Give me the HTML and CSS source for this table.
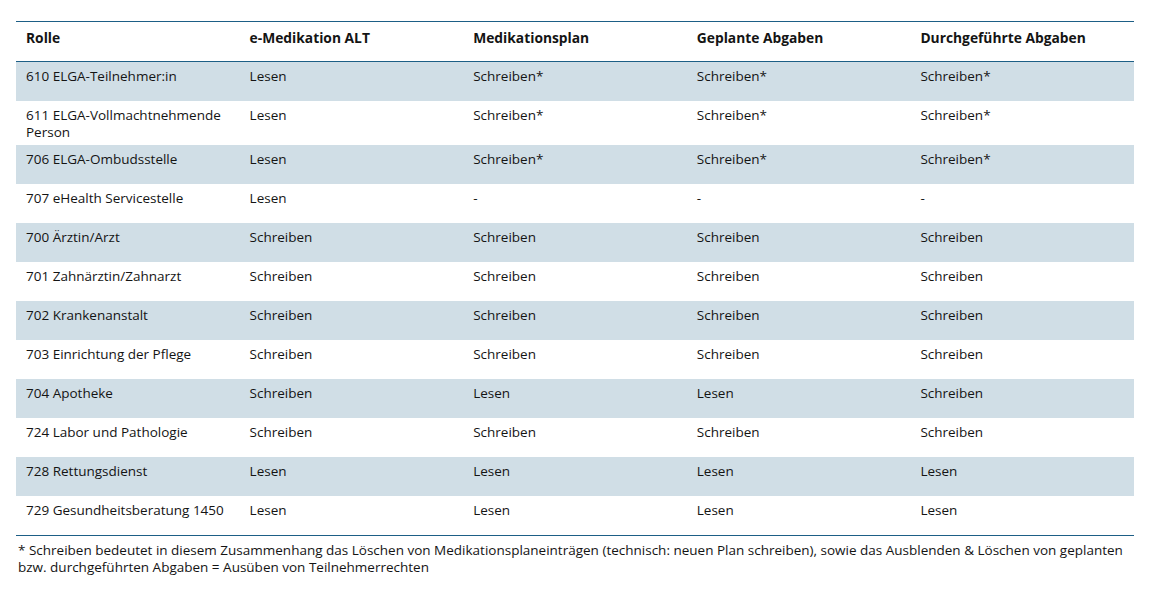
FILE: index.html
```html
<!DOCTYPE html>
<html lang="de">
<head>
<meta charset="utf-8">
<title>Rollen und Berechtigungen</title>
<link rel="stylesheet" href="styles.css">
</head>
<body>
<div class="page">
  <table class="roles">
    <thead>
      <tr>
        <th>Rolle</th>
        <th>e-Medikation ALT</th>
        <th>Medikationsplan</th>
        <th>Geplante Abgaben</th>
        <th>Durchgeführte Abgaben</th>
      </tr>
    </thead>
    <tbody>
      <tr class="shade"><td>610 ELGA-Teilnehmer:in</td><td>Lesen</td><td>Schreiben*</td><td>Schreiben*</td><td>Schreiben*</td></tr>
      <tr><td>611 ELGA-Vollmachtnehmende Person</td><td>Lesen</td><td>Schreiben*</td><td>Schreiben*</td><td>Schreiben*</td></tr>
      <tr class="shade"><td>706 ELGA-Ombudsstelle</td><td>Lesen</td><td>Schreiben*</td><td>Schreiben*</td><td>Schreiben*</td></tr>
      <tr><td>707 eHealth Servicestelle</td><td>Lesen</td><td>-</td><td>-</td><td>-</td></tr>
      <tr class="shade"><td>700 Ärztin/Arzt</td><td>Schreiben</td><td>Schreiben</td><td>Schreiben</td><td>Schreiben</td></tr>
      <tr><td>701 Zahnärztin/Zahnarzt</td><td>Schreiben</td><td>Schreiben</td><td>Schreiben</td><td>Schreiben</td></tr>
      <tr class="shade"><td>702 Krankenanstalt</td><td>Schreiben</td><td>Schreiben</td><td>Schreiben</td><td>Schreiben</td></tr>
      <tr><td>703 Einrichtung der Pflege</td><td>Schreiben</td><td>Schreiben</td><td>Schreiben</td><td>Schreiben</td></tr>
      <tr class="shade"><td>704 Apotheke</td><td>Schreiben</td><td>Lesen</td><td>Lesen</td><td>Schreiben</td></tr>
      <tr><td>724 Labor und Pathologie</td><td>Schreiben</td><td>Schreiben</td><td>Schreiben</td><td>Schreiben</td></tr>
      <tr class="shade"><td>728 Rettungsdienst</td><td>Lesen</td><td>Lesen</td><td>Lesen</td><td>Lesen</td></tr>
      <tr><td>729 Gesundheitsberatung 1450</td><td>Lesen</td><td>Lesen</td><td>Lesen</td><td>Lesen</td></tr>
    </tbody>
  </table>
  <p class="note">* Schreiben bedeutet in diesem Zusammenhang das Löschen von Medikationsplaneinträgen (technisch: neuen Plan schreiben), sowie das Ausblenden &amp; Löschen von geplanten bzw. durchgeführten Abgaben = Ausüben von Teilnehmerrechten</p>
</div>
</body>
</html>
```

FILE: styles.css
```css
html, body {
  margin: 0;
  padding: 0;
  background: #ffffff;
}

body {
  font-family: "Open Sans", "Noto Sans", sans-serif;
  font-size: 13.5px;
  color: #141414;
}

.page {
  padding: 21px 0 0 16px;
  width: 1118px;
}

.roles {
  width: 1118px;
  border-collapse: collapse;
  table-layout: fixed;
  border-top: 1px solid #1d5f86;
  border-bottom: 1px solid #1d5f86;
}

.roles th,
.roles td {
  text-align: left;
  vertical-align: top;
  padding: 6px 10px 4px 10px;
  line-height: 17px;
}

.roles th {
  font-weight: 700;
  font-size: 13.8px;
  padding-top: 7px;
  padding-bottom: 3px;
  height: 29px;
  border-bottom: 1px solid #1d5f86;
}

.roles td {
  height: 29px;
}

.roles tr.shade td {
  background: #d0dee6;
}

.note {
  margin: 6px 0 0 2px;
  line-height: 17px;
}
```
